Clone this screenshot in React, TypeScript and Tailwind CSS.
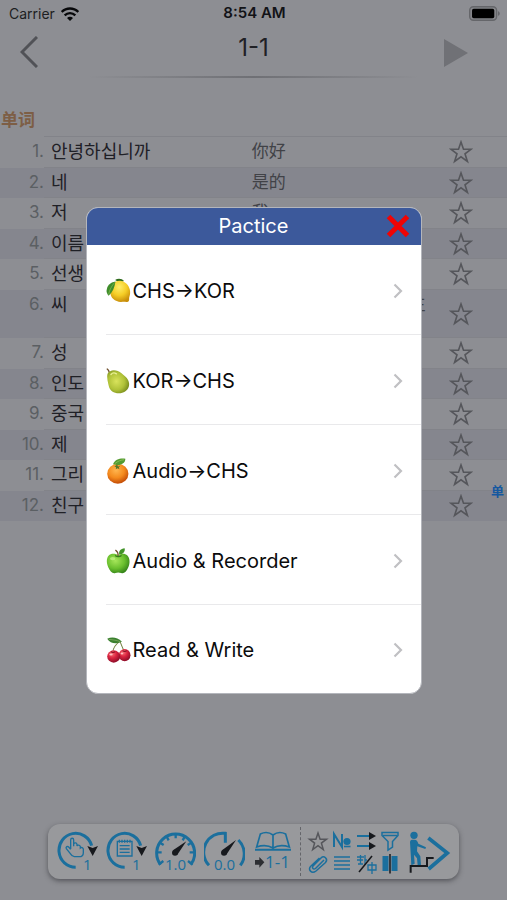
import type { ReactNode } from "react";

type Word = { ko: string; zh: string };

const words: Word[] = [
  { ko: "안녕하십니까", zh: "你好" },
  { ko: "네", zh: "是的" },
  { ko: "저", zh: "我" },
  { ko: "이름", zh: "名字" },
  { ko: "선생", zh: "老师" },
  { ko: "씨", zh: "氏 接在姓名后称呼先生" },
  { ko: "성", zh: "姓" },
  { ko: "인도", zh: "印度" },
  { ko: "중국", zh: "中国" },
  { ko: "제", zh: "我的" },
  { ko: "그리", zh: "还有" },
  { ko: "친구", zh: "朋友" },
];

const practices = [
  { label: "CHS→KOR", icon: <Lemon /> },
  { label: "KOR→CHS", icon: <Pear /> },
  { label: "Audio→CHS", icon: <Tangerine /> },
  { label: "Audio & Recorder", icon: <Apple /> },
  { label: "Read & Write", icon: <Cherries /> },
];

export default function App() {
  return (
    <div className="relative flex min-h-screen flex-col bg-[#8d8e93] font-[Inter,'Noto_Sans_CJK_KR',sans-serif] text-[#1f2026]">
      <StatusBar />
      <Header />
      <main className="flex-1 pt-[30px]">
        <h2 className="h-[28px] pl-px font-['Noto_Sans_CJK_SC',sans-serif] text-[17px] leading-[22px] font-bold text-[#7d5e45]">
          单词
        </h2>
        <WordTable />
      </main>
      <a
        href="#words"
        className="absolute top-[483px] right-[3px] font-['Noto_Sans_CJK_SC',sans-serif] text-[13px] leading-4 font-bold text-[#1558a0]"
      >
        单
      </a>
      <Toolbar />
      <PracticeDialog />
    </div>
  );
}

function StatusBar() {
  return (
    <div className="grid h-[27px] grid-cols-3 items-center pr-[7px] pl-[9px] text-[14px] text-[#1d1e22]">
      <div className="flex items-center gap-[6px]">
        <span>Carrier</span>
        <svg viewBox="0 0 54 42" className="h-[14px] w-[18px]" fill="none" stroke="#07080a" strokeWidth="7">
          <path d="M2 15C16 1 38 1 52 15" />
          <path d="M11 25C20 16 34 16 43 25" />
          <path d="M27 42 18 33C23 28 31 28 36 33Z" fill="#07080a" stroke="none" />
        </svg>
      </div>
      <span className="text-center text-[15px] font-semibold text-[#121317]">8:54 AM</span>
      <svg viewBox="0 0 92 44" className="h-[15px] w-[31px] justify-self-end">
        <rect x="2" y="2" width="80" height="40" rx="11" fill="#85868a" stroke="#65666a" strokeWidth="4" />
        <rect x="9" y="8" width="66" height="28" rx="5" fill="#000" />
        <path d="M86 15c7 2 7 12 0 14z" fill="#65666a" />
      </svg>
    </div>
  );
}

function Header() {
  return (
    <header className="flex h-[51px] flex-col">
      <div className="grid flex-1 grid-cols-[1fr_auto_1fr] items-center">
        <button type="button" aria-label="Back" className="justify-self-start pl-[20px]">
          <svg viewBox="0 0 18 32" className="h-[32px] w-[18px]" fill="none" stroke="#515257" strokeWidth="3">
            <path d="M17 1 2 16 17 31" />
          </svg>
        </button>
        <h1 className="pb-2 text-[24px] leading-8 text-[#1f2025]">1-1</h1>
        <button type="button" aria-label="Play" className="justify-self-end pt-[2px] pr-[39px]">
          <svg viewBox="0 0 24 28" className="h-[28px] w-[24px]">
            <path d="M0 0 24 14 0 28Z" fill="#707176" />
          </svg>
        </button>
      </div>
      <div className="mx-[88px] h-[2px] bg-linear-to-r from-transparent via-[#6f7075] to-transparent" />
    </header>
  );
}

function WordTable() {
  return (
    <table id="words" className="w-full table-fixed border-collapse">
      <colgroup>
        <col className="w-[44px]" />
        <col className="w-[41%]" />
        <col />
        <col className="w-[72px]" />
      </colgroup>
      <tbody>
        {words.map((word, i) => (
          <tr
            key={word.ko}
            className={
              i === 5
                ? "h-[48px] bg-[#85868e] align-top"
                : "h-[31px] align-top even:h-[30px] even:bg-[#85868e]"
            }
          >
            <td className="p-0 text-right text-[17px] leading-[29px] text-[#5b5f63]">{i + 1}.</td>
            <td className="border-t border-[#828389] p-0 pl-[7px] text-[18px] leading-[29px] whitespace-nowrap">
              {word.ko}
            </td>
            <td className="border-t border-[#828389] p-0 font-['Noto_Sans_CJK_SC',sans-serif] text-[17px] leading-[26px] whitespace-nowrap text-[#414247]">
              {word.zh}
            </td>
            <td className="border-t border-[#828389] p-0 pr-5 align-middle">
              <button type="button" aria-label={`Star ${word.ko}`} className="mx-auto block">
                <Star />
              </button>
            </td>
          </tr>
        ))}
      </tbody>
    </table>
  );
}

function Star() {
  return (
    <svg viewBox="0 0 24 24" className="size-[24px]" fill="none" stroke="#55565b" strokeWidth="1.6">
      <path d="M12 2 14.5 9.2H22.2L16 13.8 18.4 21.4 12 16.8 5.6 21.4 8 13.8 1.8 9.2H9.5Z" />
    </svg>
  );
}

function PracticeDialog() {
  return (
    <div className="fixed inset-0 z-10 flex items-center justify-center px-4">
      <div
        role="dialog"
        aria-labelledby="practice-title"
        className="w-full max-w-[336px] overflow-hidden rounded-[12px] border border-[#b4b6bc] bg-white"
      >
        <div className="relative flex h-[37px] items-center justify-center bg-[#3c599b]">
          <h2 id="practice-title" className="text-[20px] leading-6 text-white">
            Pactice
          </h2>
          <button type="button" aria-label="Close" className="absolute right-[11px]">
            <svg viewBox="0 0 24 24" className="size-[24px]" stroke="#f00404" strokeWidth="5">
              <path d="M2.5 2.5 21.5 21.5M21.5 2.5 2.5 21.5" />
            </svg>
          </button>
        </div>
        <ul className="pl-[19px]">
          {practices.map(({ label, icon }) => (
            <li key={label} className="h-[90px] border-b border-[#e9e9eb] last:h-[88px] last:border-b-0">
              <button
                type="button"
                className="flex h-full w-full items-center pt-[3px] pr-[18px] text-[20px] text-[#0b0b0c]"
              >
                {icon}
                <span className="pl-[2px]">{label}</span>
                <svg
                  viewBox="0 0 10 16"
                  className="ml-auto h-[16px] w-[10px]"
                  fill="none"
                  stroke="#c0c0c3"
                  strokeWidth="2.2"
                >
                  <path d="M1.5 1.5 8 8 1.5 14.5" />
                </svg>
              </button>
            </li>
          ))}
        </ul>
      </div>
    </div>
  );
}

function Fruit({ children }: { children: ReactNode }) {
  return (
    <svg viewBox="0 0 72 76" className="h-[26px] w-[25px]" aria-hidden="true">
      {children}
    </svg>
  );
}

function Lemon() {
  return (
    <Fruit>
      <defs>
        <radialGradient id="lemon" cx="45%" cy="30%" r="70%">
          <stop offset="0" stopColor="#ffee6a" />
          <stop offset="0.55" stopColor="#f5cd25" />
          <stop offset="1" stopColor="#c98f0a" />
        </radialGradient>
      </defs>
      <path d="M26 6c8-6 20-5 26 3L40 14Z" fill="#2f6b1c" />
      <path
        d="M17 20C24 9 38 5 50 10c13 6 21 20 20 34 0 7-3 11-3 16 1 7-2 12-9 10-5-1-9 0-15 0C26 70 12 58 12 42c0-9 1-16 5-22Z"
        fill="url(#lemon)"
      />
      <path d="M27 10C12 12 2 22 1 38c0 5 3 10 6 14C18 42 25 28 27 10Z" fill="#3f8d2b" />
      <path d="M25 13C16 23 10 34 7 48" fill="none" stroke="#89bd52" strokeWidth="2" />
    </Fruit>
  );
}

function Pear() {
  return (
    <Fruit>
      <defs>
        <radialGradient id="pear" cx="42%" cy="48%" r="62%">
          <stop offset="0" stopColor="#d9e35c" />
          <stop offset="0.6" stopColor="#b0c238" />
          <stop offset="1" stopColor="#75891b" />
        </radialGradient>
      </defs>
      <path d="M9 13C8 8 6 5 3 3" stroke="#71502d" strokeWidth="4" fill="none" strokeLinecap="round" />
      <path
        d="M4 17C10 6 23 4 34 9c8 4 14 9 21 15 11 9 14 21 11 31-4 12-15 19-29 19-15 0-26-8-29-20C5 42 1 28 4 17Z"
        fill="url(#pear)"
      />
      <path d="M14 19c4-5 10-6 16-2" stroke="#e8ef95" strokeWidth="4" fill="none" strokeLinecap="round" />
    </Fruit>
  );
}

function Tangerine() {
  return (
    <Fruit>
      <defs>
        <radialGradient id="tangerine" cx="42%" cy="32%" r="65%">
          <stop offset="0" stopColor="#ffb650" />
          <stop offset="0.6" stopColor="#f48a1d" />
          <stop offset="1" stopColor="#c85209" />
        </radialGradient>
      </defs>
      <ellipse cx="34" cy="46" rx="31" ry="29" fill="url(#tangerine)" />
      <path d="M31 23c0-5 2-8 6-11" stroke="#4c6a20" strokeWidth="4" fill="none" />
      <path d="M20 18C26 4 40 0 56 2c0 13-13 20-27 18Z" fill="#549b31" />
      <path d="M26 16C34 9 43 6 52 5" stroke="#9bca62" strokeWidth="2" fill="none" />
      <path d="m31 21 4 4 6-2-4 5 2 5-6-3-5 3 1-6-5-3Z" fill="#54782a" />
    </Fruit>
  );
}

function Apple() {
  return (
    <Fruit>
      <defs>
        <radialGradient id="apple" cx="38%" cy="36%" r="68%">
          <stop offset="0" stopColor="#a6e65a" />
          <stop offset="0.6" stopColor="#69be2d" />
          <stop offset="1" stopColor="#36851a" />
        </radialGradient>
      </defs>
      <path
        d="M35 21c9-6 20-6 27 1 8 8 8 24 2 36-5 11-12 18-20 15-6-2-12-2-17 0-9 3-16-6-21-17C1 45 0 31 7 23c7-8 19-7 28-2Z"
        fill="url(#apple)"
      />
      <path d="M26 22c6 4 13 4 19 0" stroke="#347b1b" strokeWidth="4" fill="none" />
      <path d="M35 23c0-8-2-13-8-17" stroke="#704b2a" strokeWidth="4" fill="none" />
      <path d="M38 19C36 9 42 2 54 1c2 9-4 18-16 18Z" fill="#429329" />
      <ellipse cx="19" cy="31" rx="8" ry="5" fill="#c7f48d" opacity=".7" />
    </Fruit>
  );
}

function Cherries() {
  return (
    <Fruit>
      <defs>
        <radialGradient id="cherry" cx="38%" cy="30%" r="66%">
          <stop offset="0" stopColor="#f66c73" />
          <stop offset="0.5" stopColor="#da2440" />
          <stop offset="1" stopColor="#96102c" />
        </radialGradient>
      </defs>
      <path d="M40 12C27 22 20 34 19 45M40 12c4 10 8 22 14 32" stroke="#748343" strokeWidth="3" fill="none" />
      <path d="M3 5C17-1 33 1 46 14 30 21 12 20 3 5Z" fill="#3b8130" />
      <path d="M8 7c12 1 24 3 34 7" stroke="#8db269" strokeWidth="2" fill="none" />
      <ellipse cx="54" cy="53" rx="17" ry="18" fill="url(#cherry)" />
      <ellipse cx="22" cy="57" rx="19" ry="18" fill="url(#cherry)" />
      <path d="M14 43q6 5 12 0M48 40q6 5 12 0" stroke="#841126" strokeWidth="3" fill="none" />
      <ellipse cx="14" cy="51" rx="5" ry="3" fill="#ffc0c0" />
      <ellipse cx="46" cy="48" rx="4" ry="3" fill="#ffc0c0" />
    </Fruit>
  );
}

function ToolButton({
  label,
  value,
  valueClass,
  children,
}: {
  label: string;
  value: string;
  valueClass: string;
  children: ReactNode;
}) {
  return (
    <button type="button" aria-label={label} className="relative h-[47px] w-[41px] shrink-0">
      <svg viewBox="0 0 123 141" className="size-full" fill="none" stroke="#1b6f9d" strokeWidth="9">
        {children}
      </svg>
      <span className={`absolute bottom-[2px] font-['Open_Sans',sans-serif] leading-[18px] text-[#1b6f9d] ${valueClass}`}>
        {value}
      </span>
    </button>
  );
}

function Toolbar() {
  return (
    <nav className="mx-12 mb-[21px] flex h-[55px] items-center justify-between rounded-[12px] bg-[#98999c] pr-2 pl-[9px] shadow-[0_2px_5px_rgba(30,30,35,0.5)]">
      <div className="flex gap-2">
        <ToolButton label="Repeat by tap" value="1" valueClass="left-[26px] text-[15px]">
          <path d="M56 118A50 51 0 1 1 104 53" />
          <path d="M91 54 107 60 123 54 107 84Z" fill="#17191d" stroke="none" />
          <path
            d="M41 63V36c0-7 9-7 9 0v19-7c2-5 9-4 10 1v5c2-4 9-3 10 2v4c3-3 9-1 9 4v10c0 8-6 12-13 12H52c-6 0-9-4-12-9L28 62c-3-6 4-8 7-5l6 7"
            strokeWidth="4"
          />
        </ToolButton>
        <ToolButton label="Repeat list" value="1" valueClass="left-[26px] text-[15px]">
          <path d="M56 118A50 51 0 1 1 104 53" />
          <path d="M91 54 107 60 123 54 107 84Z" fill="#17191d" stroke="none" />
          <path d="M34 40H78V84H34ZM41 53H71M41 63H71M41 73H71M40 35v9M48 35v9M56 35v9M64 35v9M72 35v9" strokeWidth="4" />
        </ToolButton>
        <ToolButton label="Speed" value="1.0" valueClass="inset-x-0 text-center text-[15px]">
          <path d="M17 110A57 57 0 1 1 107 110" />
          <path d="M62 18V31M35 26 41 37M15 44 26 51M7 73H20M89 26 83 37M109 44 98 51M117 73H104M11 110 25 99M113 110 99 99" strokeWidth="7" />
          <path d="M54 67 94 40 67 80Z" fill="#17191d" stroke="none" />
          <circle cx="60" cy="74" r="9" fill="#17191d" stroke="none" />
        </ToolButton>
        <ToolButton label="Interval" value="0.0" valueClass="inset-x-0 text-center text-[15px]">
          <path d="M15 112A57 57 0 0 1 64 16V44M103 36A57 57 0 0 1 109 112" />
          <path d="M54 67 96 36 67 80Z" fill="#17191d" stroke="none" />
          <circle cx="60" cy="74" r="9" fill="#17191d" stroke="none" />
        </ToolButton>
        <ToolButton label="Lesson" value="1-1" valueClass="right-1 bottom-[4px] text-[17px]">
          <path
            d="M60 60V21C48 12 34 12 22 18L11 57C28 51 45 51 60 60ZM60 60V21C72 12 86 12 98 18L109 57C92 51 75 51 60 60Z"
            strokeWidth="5"
          />
          <path d="M6 65H114" strokeWidth="6" />
          <path d="M6 96H19V87L34 103 19 119V110H6Z" fill="#2c2e32" stroke="none" />
        </ToolButton>
      </div>
      <div className="h-[49px] border-l border-dashed border-[#64656a]" />
      <div className="grid grid-cols-4">
        <SmallTool label="Favourites">
          <path
            d="M12 4 14.1 10.2H20.5L15.4 14.1 17.3 20.5 12 16.6 6.7 20.5 8.6 14.1 3.5 10.2H9.9Z"
            stroke="#55565b"
            strokeWidth="1.5"
          />
        </SmallTool>
        <SmallTool label="Numbering">
          <path d="M4 18V5L12 18V5" strokeWidth="2" />
          <circle cx="17" cy="12.5" r="3.6" fill="#1b6f9d" stroke="none" />
          <path d="M14 17.5H20.5" strokeWidth="1.6" />
        </SmallTool>
        <SmallTool label="Sequence">
          <path d="M3 7H16M3 17H16" strokeWidth="2.2" />
          <path d="M15 3 22 7 15 11ZM15 13 22 17 15 21Z" fill="#17191d" stroke="none" />
        </SmallTool>
        <SmallTool label="Filter">
          <path d="M4 3.5H20V6.5L14.5 12.5V18L10 21V12.5L4 6.5ZM5 6.5H19" />
        </SmallTool>
        <SmallTool label="Attachment">
          <path d="M18 8 9.5 16.5C7.5 18 5.5 16 7 14L15 6C18 3 22.5 7 19.5 10.5L10 19C5.5 22.5 1.5 17.5 5 14L13.5 6" />
        </SmallTool>
        <SmallTool label="Lines">
          <path d="M4 5H20M4 9H20M4 13H20M4 17H20" strokeWidth="1.6" />
        </SmallTool>
        <SmallTool label="Language">
          <path d="M3 5H10M6.5 3V12M3 8H9M4 12H9M11 3V13M11 8H13M14 13H22V18H14ZM18 10V22" strokeWidth="1.3" />
          <path d="M18 4 5 20" stroke="#17191d" strokeWidth="1.6" />
        </SmallTool>
        <SmallTool label="Columns">
          <path d="M4.5 4H10.5V19H4.5ZM13.5 4H19.5V19H13.5Z" fill="#1b6f9d" stroke="none" />
          <path d="M12 2V21.5" stroke="#17191d" />
        </SmallTool>
      </div>
      <button type="button" aria-label="Practice" className="h-[47px] w-[43px] shrink-0">
        <svg viewBox="0 0 129 141" className="size-full" fill="none" stroke="#1b6f9d">
          <path d="M61 30 118 75 62 123" strokeWidth="11" />
          <circle cx="18" cy="22" r="11" fill="#1b6f9d" stroke="none" />
          <path
            d="M6 42C7 34 13 35 19 35 27 35 29 40 31 47L54 58 52 63 28 55 27 70 37 85 39 112 29 112 27 91 18 80 20 107 10 112 8 75Z"
            fill="#1b6f9d"
            stroke="none"
          />
          <path d="M8 134V114H57V90H77" stroke="#17191d" strokeWidth="6" />
        </svg>
      </button>
    </nav>
  );
}

function SmallTool({ label, children }: { label: string; children: ReactNode }) {
  return (
    <button type="button" aria-label={label} className="h-[23px] w-[24px]">
      <svg viewBox="0 0 24 23" className="size-full" fill="none" stroke="#1b6f9d" strokeWidth="1.5">
        {children}
      </svg>
    </button>
  );
}
